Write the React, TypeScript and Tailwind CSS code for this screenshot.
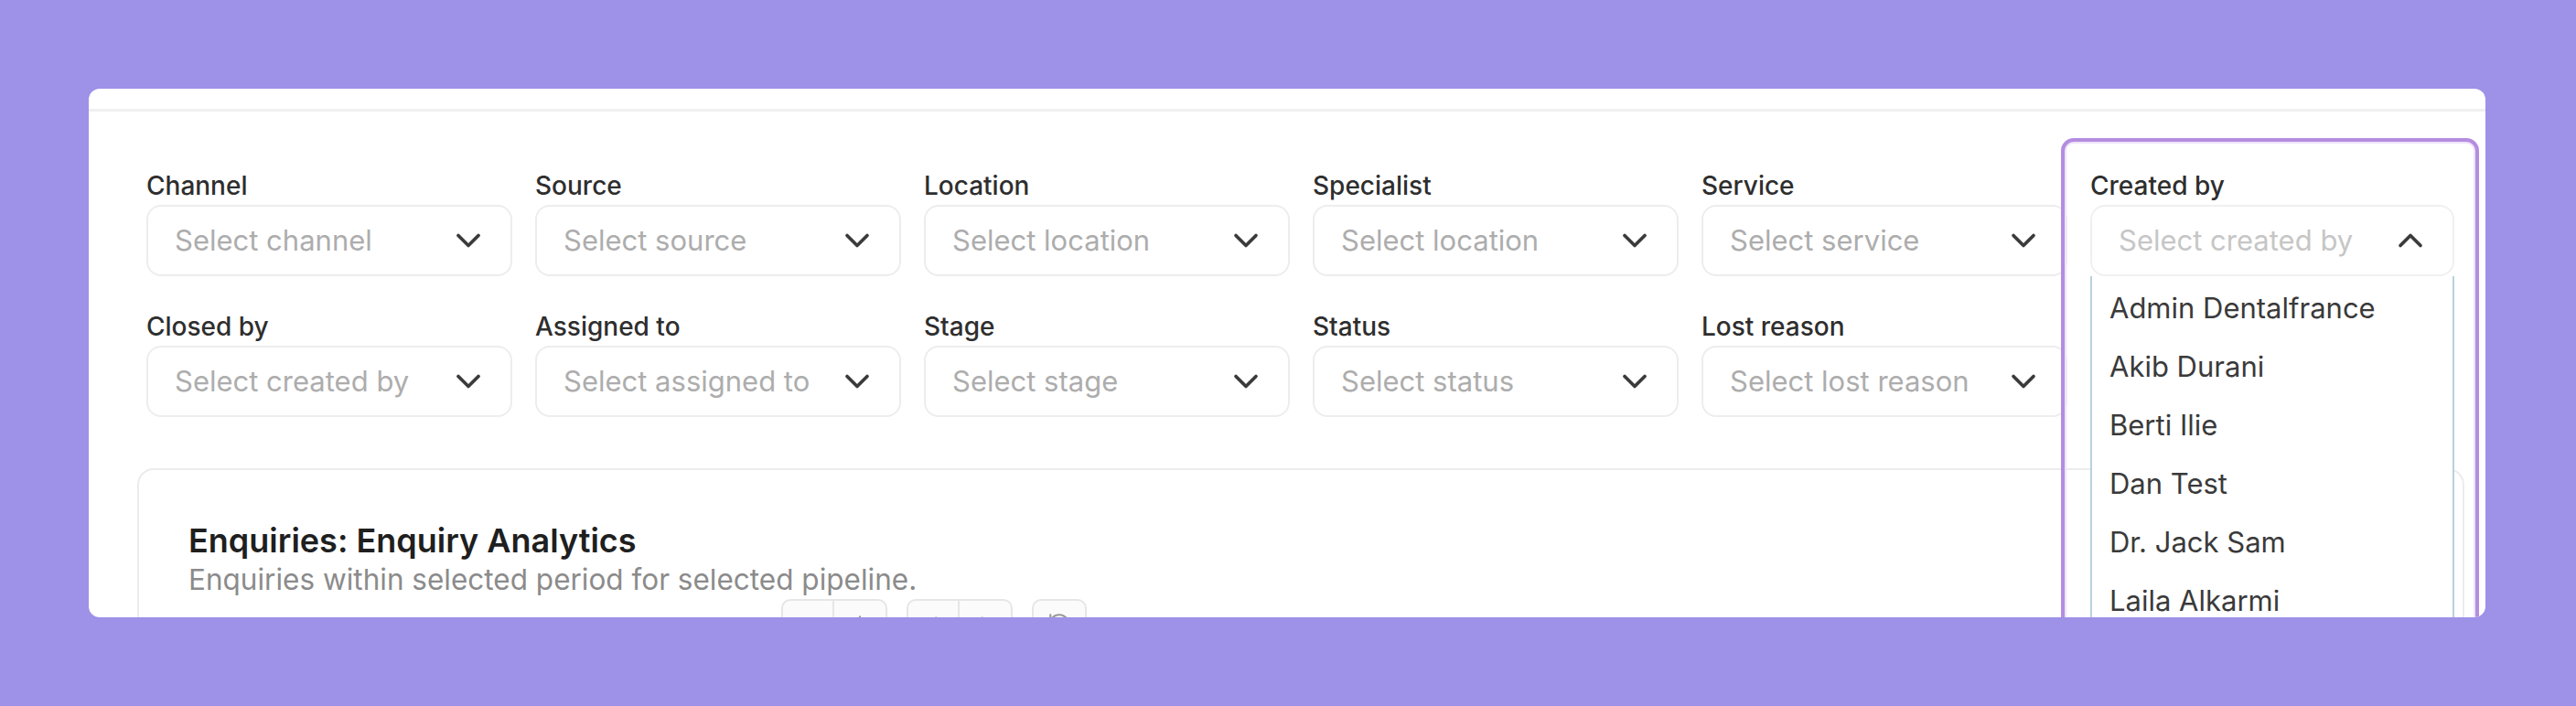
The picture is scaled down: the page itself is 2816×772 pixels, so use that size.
import { ChevronDown, ChevronUp, Minus, Plus, ChevronLeft, ChevronRight, RotateCcw } from "lucide-react";

type Filter = { label: string; placeholder: string };

const filters: Filter[] = [
  { label: "Channel", placeholder: "Select channel" },
  { label: "Source", placeholder: "Select source" },
  { label: "Location", placeholder: "Select location" },
  { label: "Specialist", placeholder: "Select location" },
  { label: "Service", placeholder: "Select service" },
  { label: "Created by", placeholder: "Select created by" },
  { label: "Closed by", placeholder: "Select created by" },
  { label: "Assigned to", placeholder: "Select assigned to" },
  { label: "Stage", placeholder: "Select stage" },
  { label: "Status", placeholder: "Select status" },
  { label: "Lost reason", placeholder: "Select lost reason" },
];

const creators = ["Admin Dentalfrance", "Akib Durani", "Berti Ilie", "Dan Test", "Dr. Jack Sam", "Laila Alkarmi"];

function FilterSelect({ filter }: { filter: Filter }) {
  return (
    <div>
      <div className="mb-[4px] text-[28px] leading-[34px] font-medium text-[#2e2e2e]">{filter.label}</div>
      <div className="flex h-[78px] items-center justify-between rounded-[16px] border-2 border-[#ededed] bg-white pl-[29px] pr-[24px]">
        <span className="whitespace-nowrap text-[31px] text-[#adadad]">{filter.placeholder}</span>
        <ChevronDown size={44} strokeWidth={2} className="shrink-0 text-[#3a3a3a]" />
      </div>
    </div>
  );
}

function CreatedBySelect({ filter }: { filter: Filter }) {
  return (
    <div className="relative">
      {/* focus ring around the open field */}
      <div className="pointer-events-none absolute left-[-32px] right-[-25px] top-[-35px] z-20 h-[700px] rounded-[14px] border-[4px] border-[#b48de0] shadow-[inset_0_0_0_2px_#eee4fa]" />
      <div className="mb-[4px] text-[28px] leading-[34px] font-medium text-[#2e2e2e]">{filter.label}</div>
      <div className="relative">
        <div className="flex h-[78px] w-[398px] items-center justify-between rounded-[16px] border-2 border-[#f0f0f0] bg-white pl-[29px] pr-[24px]">
          <span className="whitespace-nowrap text-[31px] text-[#c6c6c6]">{filter.placeholder}</span>
          <ChevronUp size={44} strokeWidth={2} className="shrink-0 text-[#3a3a3a]" />
        </div>
        <ul className="absolute left-0 top-full z-10 h-[400px] w-[398px] border-x-2 border-[#b6d2de] bg-white pt-[3px]">
          {creators.map((name) => (
            <li key={name} className="flex h-[64px] items-center pl-[19px] text-[31px] text-[#3a3a3a]">
              {name}
            </li>
          ))}
        </ul>
      </div>
    </div>
  );
}

function ToolButton({ children }: { children: React.ReactNode }) {
  return <div className="flex h-[50px] w-[56px] items-center justify-center text-[#9a9a9a]">{children}</div>;
}

export default function App() {
  return (
    <div className="h-[772px] w-[2816px] bg-[#9d91e8] pl-[97px] pt-[97px]" style={{ fontFamily: "Inter, 'Noto Sans', sans-serif" }}>
      <div className="h-[578px] w-[2620px] overflow-hidden rounded-[12px] bg-white">
        <div className="h-[25px] border-b-[3px] border-[#f0f0f0]" />

        <div className="grid grid-cols-[repeat(6,400px)] gap-x-[25px] gap-y-[38px] pl-[63px] pt-[64px]">
          {filters.map((f) =>
            f.label === "Created by" ? <CreatedBySelect key={f.label} filter={f} /> : <FilterSelect key={f.label} filter={f} />
          )}
        </div>

        <div className="ml-[53px] mt-[56px] h-[400px] w-[2544px] rounded-[18px] border-2 border-[#ececec] pl-[54px] pt-[56px]">
          <h2 className="text-[36px] leading-[42px] font-semibold text-[#1f1f1f]">Enquiries: Enquiry Analytics</h2>
          <p className="mt-[3px] text-[31.5px] leading-[38px] text-[#8b8b8b]">Enquiries within selected period for selected pipeline.</p>
          <div className="mt-[2px] flex gap-[21px] pl-[648px]">
            <div className="flex divide-x-2 divide-[#e6e6e6] rounded-[10px] border-2 border-[#e6e6e6] bg-[#fbfbfb]">
              <ToolButton><Minus size={26} /></ToolButton>
              <ToolButton><Plus size={26} /></ToolButton>
            </div>
            <div className="flex divide-x-2 divide-[#e6e6e6] rounded-[10px] border-2 border-[#e6e6e6] bg-[#fbfbfb]">
              <ToolButton><ChevronLeft size={26} /></ToolButton>
              <ToolButton><ChevronRight size={26} /></ToolButton>
            </div>
            <div className="flex rounded-[10px] border-2 border-[#e6e6e6] bg-[#fbfbfb]">
              <ToolButton><RotateCcw size={26} /></ToolButton>
            </div>
          </div>
        </div>
      </div>
    </div>
  );
}
